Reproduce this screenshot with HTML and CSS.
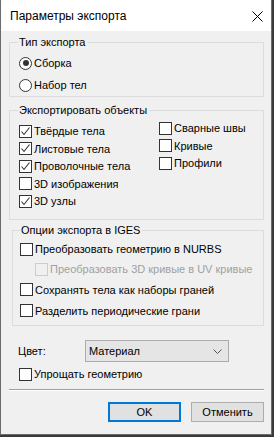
FILE: index.html
```html
<!DOCTYPE html>
<html lang="ru">
<head>
    <meta charset="UTF-8">
    <title>Параметры экспорта</title>
    <link rel="stylesheet" href="styles.css">
</head>
<body>

<div class="window">
    <!-- Title bar -->
    <div class="titlebar">
        <span class="title">Параметры экспорта</span>
        <svg class="close" width="11" height="11" viewBox="0 0 11 11">
            <path d="M0.5 0.5 L10.5 10.5 M10.5 0.5 L0.5 10.5" stroke="#000" stroke-width="1" fill="none"/>
        </svg>
    </div>

    <div class="content">
        <!-- Export type -->
        <fieldset class="group group-type">
            <legend>Тип экспорта</legend>
            <label class="row"><span class="radio checked"></span>Сборка</label>
            <label class="row"><span class="radio"></span>Набор тел</label>
        </fieldset>

        <!-- Objects -->
        <fieldset class="group group-objects">
            <legend>Экспортировать объекты</legend>
            <div class="columns">
                <div class="col">
                    <label class="row"><span class="check checked"></span>Твёрдые тела</label>
                    <label class="row"><span class="check checked"></span>Листовые тела</label>
                    <label class="row"><span class="check checked"></span>Проволочные тела</label>
                    <label class="row"><span class="check"></span>3D изображения</label>
                    <label class="row"><span class="check checked"></span>3D узлы</label>
                </div>
                <div class="col col-right">
                    <label class="row"><span class="check"></span>Сварные швы</label>
                    <label class="row"><span class="check"></span>Кривые</label>
                    <label class="row"><span class="check"></span>Профили</label>
                </div>
            </div>
        </fieldset>

        <!-- IGES options -->
        <fieldset class="group group-iges">
            <legend>Опции экспорта в IGES</legend>
            <label class="row"><span class="check"></span>Преобразовать геометрию в NURBS</label>
            <label class="row sub disabled"><span class="check"></span>Преобразовать 3D кривые в UV кривые</label>
            <label class="row tall"><span class="check"></span>Сохранять тела как наборы граней</label>
            <label class="row tall"><span class="check"></span>Разделить периодические грани</label>
        </fieldset>

        <div class="color-row">
            <span class="color-label">Цвет:</span>
            <div class="select">
                <span>Материал</span>
                <svg width="9" height="5" viewBox="0 0 9 5">
                    <path d="M0.5 0.5 L4.5 4.5 L8.5 0.5" stroke="#555" stroke-width="1" fill="none"/>
                </svg>
            </div>
        </div>

        <label class="row simplify"><span class="check"></span>Упрощать геометрию</label>

        <div class="separator"></div>

        <div class="buttons">
            <button class="btn btn-default">OK</button>
            <button class="btn">Отменить</button>
        </div>
    </div>
</div>

</body>
</html>
```

FILE: styles.css
```css
* {
    box-sizing: border-box;
}

body {
    margin: 0;
    background-color: #3a3a3a;
    font-family: "Liberation Sans", Arial, sans-serif;
    font-size: 11px;
    color: #000;
}

/* Dialog window */
.window {
    width: 272px;
    height: 435px;
    background-color: #f0f0f0;
    border: 1px solid #6b6b6b;
    border-top: none;
    display: flex;
    flex-direction: column;
}

.titlebar {
    height: 31px;
    background-color: #fff;
    display: flex;
    align-items: center;
    justify-content: space-between;
    padding: 0 8px 0 9px;
    flex-shrink: 0;
}

.title {
    font-size: 12px;
    line-height: 16px;
    margin-top: 1px;
}

.close {
    display: block;
    margin-top: 1px;
}

.content {
    padding: 4px 7px 0 8px;
    display: flex;
    flex-direction: column;
}

/* Group boxes */
.group {
    margin: 0;
    border: 1px solid #dcdcdc;
    padding: 0 0 0 9px;
    min-width: 0;
}

.group legend {
    padding: 0 2px 0 1px;
    margin-left: -1px;
    line-height: 14px;
    height: 14px;
}

.row {
    display: flex;
    align-items: center;
    white-space: nowrap;
    line-height: 14px;
}

.group-type {
    padding-top: 3px;
}

.group-type .row {
    height: 22px;
}

.group-objects {
    margin-top: 6px;
    padding-top: 5px;
    padding-bottom: 9px;
}

.columns {
    display: grid;
    grid-template-columns: 140px 1fr;
}

.col .row {
    height: 18px;
}

.col .row:nth-child(even) {
    height: 17px;
}

.col-right {
    margin-top: -3px;
}

.group-iges {
    margin: 3px 0 0 3px;
    padding: 2px 0 4px 7px;
}

.group-iges legend {
    margin-left: 0;
}

.group-iges .row {
    height: 20px;
}

.group-iges .row.tall {
    height: 21px;
}

.row.sub {
    padding-left: 15px;
}

.row.disabled {
    color: #a0a0a0;
}

/* Radio buttons and check boxes */
.radio,
.check {
    width: 13px;
    height: 13px;
    flex-shrink: 0;
    margin-right: 2px;
    background-color: #fff;
    border: 1px solid #333;
    position: relative;
}

.radio {
    border-radius: 50%;
}

.radio.checked::after {
    content: "";
    position: absolute;
    left: 2.5px;
    top: 2.5px;
    width: 6px;
    height: 6px;
    border-radius: 50%;
    background-color: #333;
}

.check.checked::before {
    content: "";
    position: absolute;
    inset: 0;
    background: url("data:image/svg+xml,%3Csvg xmlns='http://www.w3.org/2000/svg' width='11' height='11'%3E%3Cpath d='M1.5 5.5 L4 8.5 L9.5 1.5' stroke='%23333' stroke-width='1.1' fill='none'/%3E%3C/svg%3E") no-repeat;
}

.disabled .check {
    border-color: #cccccc;
    background-color: #f0f0f0;
}

/* Colour select */
.color-row {
    display: flex;
    align-items: center;
    margin-top: 14px;
    padding-left: 9px;
}

.color-label {
    width: 67px;
}

.select {
    width: 144px;
    height: 22px;
    background-color: #e5e5e5;
    border: 1px solid #acacac;
    display: flex;
    align-items: center;
    justify-content: space-between;
    padding: 0 6px 0 3px;
}

.select svg {
    display: block;
}

.simplify {
    height: 20px;
    margin-top: 2px;
    padding-left: 10px;
}

.separator {
    margin-top: 5px;
    width: 255px;
    border-top: 1px solid #a0a0a0;
    border-bottom: 1px solid #fff;
}

/* Buttons */
.buttons {
    display: flex;
    justify-content: flex-end;
    gap: 10px;
    margin-top: 11px;
    width: 255px;
}

.btn {
    height: 20px;
    width: 73px;
    background-color: #e1e1e1;
    border: 1px solid #adadad;
    font-family: inherit;
    font-size: 11px;
    padding: 0;
    color: #000;
}

.btn-default {
    border: 2px solid #0078d7;
}
```
